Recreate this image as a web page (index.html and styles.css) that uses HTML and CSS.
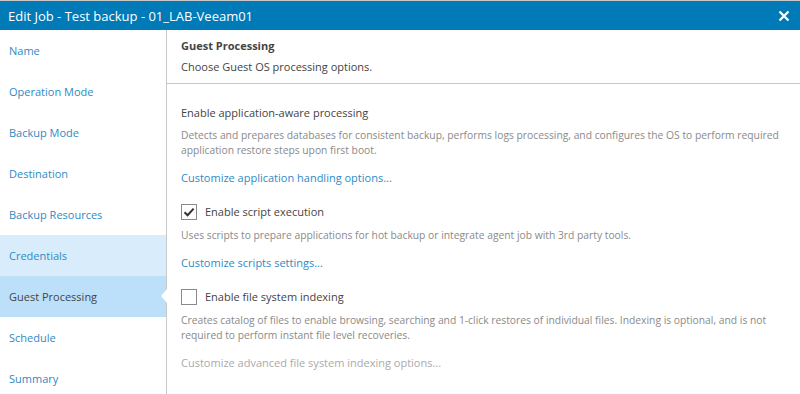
FILE: index.html
```html
<!DOCTYPE html>
<html lang="en">
<head>
    <meta charset="UTF-8">
    <title>Edit Job - Test backup - 01_LAB-Veeam01</title>
    <link rel="stylesheet" href="styles.css">
</head>
<body>
    <div class="dialog">
        <header class="title-bar">
            <span class="title">Edit Job - Test backup - 01_LAB-Veeam01</span>
            <svg class="close-icon" width="12" height="12" viewBox="0 0 12 12">
                <path d="M1.5 1.5 L10.5 10.5 M10.5 1.5 L1.5 10.5" stroke="#fff" stroke-width="2.2" fill="none"/>
            </svg>
        </header>
        <div class="dialog-body">
            <ul class="steps">
                <li class="step">Name</li>
                <li class="step">Operation Mode</li>
                <li class="step">Backup Mode</li>
                <li class="step">Destination</li>
                <li class="step">Backup Resources</li>
                <li class="step step-done">Credentials</li>
                <li class="step step-active">Guest Processing</li>
                <li class="step">Schedule</li>
                <li class="step">Summary</li>
            </ul>
            <main class="content">
                <div class="page-head">
                    <div class="page-title">Guest Processing</div>
                    <div class="page-sub">Choose Guest OS processing options.</div>
                </div>
                <div class="options">
                    <div class="option-label">Enable application-aware processing</div>
                    <p class="hint">Detects and prepares databases for consistent backup, performs logs processing, and configures the OS to perform required application restore steps upon first boot.</p>
                    <a class="link">Customize application handling options...</a>

                    <label class="check-row">
                        <span class="checkbox">
                            <svg width="14" height="14" viewBox="0 0 14 14">
                                <path d="M2.5 7.2 L5.6 10.2 L11.6 3.6" stroke="#333" stroke-width="2" fill="none"/>
                            </svg>
                        </span>
                        Enable script execution
                    </label>
                    <p class="hint">Uses scripts to prepare applications for hot backup or integrate agent job with 3rd party tools.</p>
                    <a class="link">Customize scripts settings...</a>

                    <label class="check-row">
                        <span class="checkbox"></span>
                        Enable file system indexing
                    </label>
                    <p class="hint">Creates catalog of files to enable browsing, searching and 1-click restores of individual files. Indexing is optional, and is not required to perform instant file level recoveries.</p>
                    <a class="link link-disabled">Customize advanced file system indexing options...</a>
                </div>
            </main>
        </div>
    </div>
</body>
</html>
```

FILE: styles.css
```css
body {
    margin: 0px;
    font-family: "Open Sans", Arial, sans-serif;
    background-color: #fff;
    color: #444;
}

.dialog {
    width: 800px;
    height: 394px;
    overflow: hidden;
    display: flex;
    flex-direction: column;
}

.title-bar {
    height: 29px;
    flex-shrink: 0;
    border-top: 1px solid #c8c8c8;
    background-color: #007bb8;
    display: flex;
    align-items: center;
    justify-content: space-between;
    padding: 0 10px 0 8px;
}

.title {
    color: #fff;
    font-size: 13px;
}

.close-icon {
    display: block;
}

.dialog-body {
    flex: 1;
    display: flex;
}

.steps {
    list-style: none;
    margin: 0px;
    padding: 0px;
    width: 166px;
    flex-shrink: 0;
    border-right: 1px solid #c8c8c8;
}

.step {
    height: 41px;
    line-height: 41px;
    padding-left: 9px;
    font-size: 11px;
    color: #2f8ac4;
    position: relative;
}

.step-done {
    background-color: #d9ecfb;
}

.step-active {
    background-color: #bde0fa;
    color: #444;
}

/* white notch pointing into the active step */
.step-active::after {
    content: "";
    position: absolute;
    right: -1px;
    top: 13px;
    border-style: solid;
    border-width: 7px 6px 7px 0;
    border-color: transparent #fff transparent transparent;
}

.content {
    flex: 1;
    display: flex;
    flex-direction: column;
}

.page-head {
    height: 54px;
    padding: 7px 0 0 14px;
    box-sizing: border-box;
    border-bottom: 1px solid #c8c8c8;
}

.page-title {
    font-size: 11px;
    font-weight: bold;
    color: #444;
    line-height: 18px;
}

.page-sub {
    font-size: 11px;
    line-height: 18px;
    margin-top: 3px;
}

.options {
    padding: 20px 12px 0 14px;
    font-size: 11px;
}

.option-label {
    line-height: 18px;
}

.hint {
    margin: 6px 0 0 0;
    font-size: 10.3px;
    line-height: 15px;
    color: #8a8a8a;
}

.check-row + .hint {
    margin-top: 7px;
}

.link {
    display: block;
    margin-top: 11px;
    line-height: 18px;
    color: #2f8ac4;
}

.link-disabled {
    color: #aaa;
}

.check-row {
    display: flex;
    align-items: center;
    gap: 8px;
    margin-top: 16px;
    line-height: 18px;
}

.checkbox {
    width: 14px;
    height: 14px;
    border: 1px solid #8a8a8a;
    background-color: #fff;
    display: flex;
    align-items: center;
    justify-content: center;
}
```
